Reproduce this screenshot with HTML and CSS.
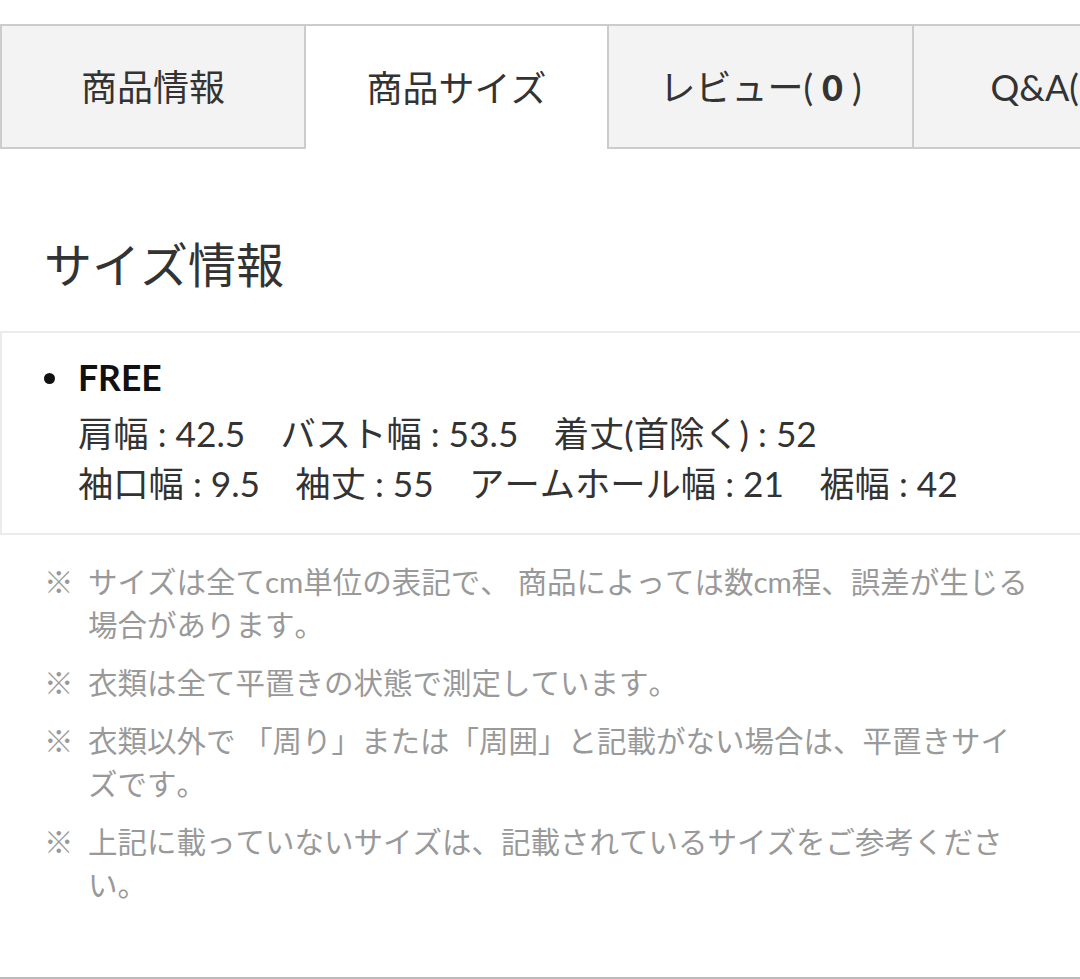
FILE: index.html
```html
<!DOCTYPE html>
<html lang="ja">
<head>
<meta charset="utf-8">
<title>商品サイズ</title>
<link rel="stylesheet" href="styles.css">
</head>
<body>
<div class="page">
  <nav class="tabs">
    <div class="tab tab-info">商品情報</div>
    <div class="tab tab-size">商品サイズ</div>
    <div class="tab tab-review">レビュー(<b class="count">0</b>)</div>
    <div class="tab tab-qa">Q&amp;A(<b class="count">0</b>)</div>
  </nav>

  <h2 class="heading">サイズ情報</h2>

  <section class="size-box">
    <div class="size-name"><span class="dot"></span>FREE</div>
    <div class="size-detail">
      <div class="size-line">肩幅 : 42.5　バスト幅 : 53.5　着丈(首除く) : 52</div>
      <div class="size-line">袖口幅 : 9.5　袖丈 : 55　アームホール幅 : 21　裾幅 : 42</div>
    </div>
  </section>

  <ul class="notes">
    <li class="note"><span class="mark">※</span><span class="note-text">サイズは全てcm単位の表記で、 商品によっては数cm程、誤差が生じる場合があります。</span></li>
    <li class="note"><span class="mark">※</span><span class="note-text">衣類は全て平置きの状態で測定しています。</span></li>
    <li class="note"><span class="mark">※</span><span class="note-text">衣類以外で 「周り」または「周囲」と記載がない場合は、平置きサイズです。</span></li>
    <li class="note"><span class="mark">※</span><span class="note-text">上記に載っていないサイズは、記載されているサイズをご参考ください。</span></li>
  </ul>

  <div class="bottom-rule"></div>
</div>
</body>
</html>
```

FILE: styles.css
```css
html, body {
  margin: 0;
  padding: 0;
  background: #fff;
}

body {
  font-family: Lato, "Noto Sans CJK JP", sans-serif;
  color: #333;
  overflow: hidden;
  font-kerning: none;
}

.page {
  min-height: 979px;
  display: flex;
  flex-direction: column;
}

/* Tabs */
.tabs {
  margin-top: 24px;
  border-top: 2px solid #cccccc;
  display: flex;
  overflow: hidden;
}

.tab {
  flex: 0 0 auto;
  box-sizing: border-box;
  height: 123px;
  display: flex;
  align-items: center;
  justify-content: center;
  font-size: 36px;
  line-height: 36px;
  color: #333;
  background: #f3f3f3;
  border-bottom: 2px solid #cccccc;
  white-space: nowrap;
}

.tab-info {
  width: 306px;
  border-left: 2px solid #cccccc;
  border-right: 2px solid #cccccc;
}

.tab-size {
  width: 301px;
  background: #fff;
  border-bottom: none;
}

.tab-review {
  width: 305px;
  border-left: 2px solid #cccccc;
}

.tab-qa {
  width: 304px;
  padding-right: 10px;
  border-left: 2px solid #cccccc;
  border-right: 2px solid #cccccc;
}

.count {
  font-weight: 900;
  padding: 0 9px;
}

/* Heading */
.heading {
  margin: 92px 0 0 44px;
  font-size: 48px;
  line-height: 48px;
  font-weight: 400;
  color: #333;
}

/* Size box */
.size-box {
  margin-top: 42px;
  border: 2px solid #ebebeb;
  border-right: none;
  padding: 20px 0 24px 42px;
}

.size-name {
  display: flex;
  align-items: center;
  font-size: 35.5px;
  line-height: 50px;
  font-weight: 700;
  color: #111;
  margin-bottom: 6px;
}

.dot {
  width: 11px;
  height: 11px;
  border-radius: 50%;
  background: #111;
  margin-right: 23px;
  flex: none;
}

.size-detail {
  padding-left: 34px;
}

.size-line {
  font-size: 35.3px;
  line-height: 50px;
  color: #333;
  white-space: nowrap;
}

/* Notes */
.notes {
  list-style: none;
  margin: 25px 0 0;
  padding: 0 44px;
  display: flex;
  flex-direction: column;
  gap: 15px;
  color: #999;
  font-size: 29.5px;
  line-height: 43px;
}

.note {
  display: flex;
}

.mark {
  flex: 0 0 44px;
}

.note-text {
  flex: 1;
  line-break: strict;
}

.bottom-rule {
  margin-top: auto;
  border-top: 2px solid #bbbbbb;
}
```
